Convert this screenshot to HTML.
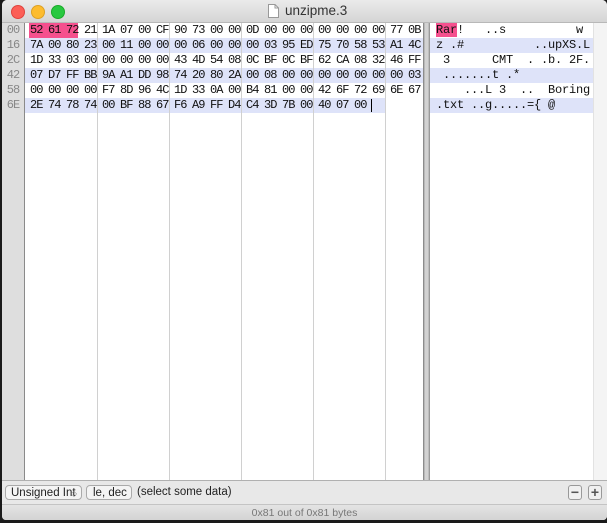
<!DOCTYPE html>
<html><head><style>
body{margin:0;width:607px;height:523px;background:#1a1a1a;position:relative;overflow:hidden;font-family:"Liberation Sans",sans-serif}
#win{position:absolute;left:2px;top:0;width:605px;height:520px;background:#ececec;border-radius:5px 5px 4px 4px;overflow:hidden}
#title{position:absolute;left:0;top:0;width:605px;height:22px;background:linear-gradient(#ebebeb,#d5d5d5);border-bottom:1px solid #b8b8b8}
.tl{position:absolute;top:5px;width:12px;height:12px;border-radius:50%}
#tt{position:absolute;left:283px;top:3px;font-size:13.5px;color:#333}
#gut{position:absolute;left:0;top:23px;width:22px;height:457px;background:#dedede;border-right:1px solid #8a8a8a}
#hex{position:absolute;left:23px;top:23px;width:398px;height:457px;background:#fff}
#div{position:absolute;left:421px;top:23px;width:7px;height:457px;background:linear-gradient(90deg,#777,#d2d2d2 30%,#d2d2d2 70%,#888)}
#txt{position:absolute;left:428px;top:23px;width:163px;height:457px;background:#fff;overflow:hidden}
#rg{position:absolute;left:591px;top:23px;width:14px;height:457px;background:#f4f4f4;border-left:1px solid #e2e2e2}
.row{position:absolute;left:0;height:15px;width:100%}
.b{background:#dee3f9}
.mono{font-family:"Liberation Mono",monospace;font-size:12px;line-height:15px;color:#111;white-space:pre}
.c{display:inline-block;width:18px;text-indent:5px;letter-spacing:-1px}
.sep{position:absolute;top:0;width:1px;height:457px;background:#d0d0d0}
.g{position:absolute;left:0;width:22px;text-align:center;color:#888;letter-spacing:-1px}
#bar{position:absolute;left:0;top:480px;width:605px;height:23px;border-top:1px solid #b0b0b0;background:#e8e8e8}
#stat{position:absolute;left:0;top:504px;width:605px;height:16px;border-top:1px solid #c4c4c4;background:linear-gradient(#e4e4e4,#d2d2d2);text-align:center;font-size:10.5px;color:#777;line-height:16px}
.btn{position:absolute;top:4px;height:15px;border:1px solid #aaa;border-radius:4px;background:#f4f4f4;font-size:11.5px;line-height:15px;color:#222;white-space:nowrap;overflow:hidden}
.sq{position:absolute;top:4px;width:12px;height:13px;border:1px solid #999;border-radius:3px;background:#f0f0f0;font-size:14px;line-height:12px;text-align:center;color:#555;font-weight:bold}
</style></head><body>
<div id="win">
<div id="title">
<div class="tl" style="left:9px;background:#fc5f57;border:.5px solid #e0443e"></div>
<div class="tl" style="left:29px;background:#fdbc2e;border:.5px solid #dea123"></div>
<div class="tl" style="left:49px;background:#28c840;border:.5px solid #1aab29"></div>
<svg style="position:absolute;left:266px;top:4px" width="11" height="14"><path d="M.5 .5H7L10.5 4V13.5H.5Z" fill="#fff" stroke="#999"/><path d="M7 .5V4H10.5" fill="none" stroke="#999"/></svg>
<div id="tt">unzipme.3</div>
</div>
<div id="gut" class="mono">
<div class="g" style="top:0">00</div><div class="g" style="top:15px">16</div><div class="g" style="top:30px">2C</div><div class="g" style="top:45px">42</div><div class="g" style="top:60px">58</div><div class="g" style="top:75px">6E</div>
</div>
<div id="hex" class="mono">
<div class="row" style="top:0"><span style="position:absolute;left:4px;top:0;width:49px;height:15px;background:#f5508e"></span></div>
<div class="row b" style="top:15px"></div><div class="row b" style="top:45px"></div><div class="row b" style="top:75px;width:360px"></div>
<div class="sep" style="left:72px"></div><div class="sep" style="left:144px"></div><div class="sep" style="left:216px"></div><div class="sep" style="left:288px"></div><div class="sep" style="left:360px"></div>
<div class="row" style="top:0"><span class="c">52</span><span class="c">61</span><span class="c">72</span><span class="c">21</span><span class="c">1A</span><span class="c">07</span><span class="c">00</span><span class="c">CF</span><span class="c">90</span><span class="c">73</span><span class="c">00</span><span class="c">00</span><span class="c">0D</span><span class="c">00</span><span class="c">00</span><span class="c">00</span><span class="c">00</span><span class="c">00</span><span class="c">00</span><span class="c">00</span><span class="c">77</span><span class="c">0B</span></div>
<div class="row" style="top:15px"><span class="c">7A</span><span class="c">00</span><span class="c">80</span><span class="c">23</span><span class="c">00</span><span class="c">11</span><span class="c">00</span><span class="c">00</span><span class="c">00</span><span class="c">06</span><span class="c">00</span><span class="c">00</span><span class="c">00</span><span class="c">03</span><span class="c">95</span><span class="c">ED</span><span class="c">75</span><span class="c">70</span><span class="c">58</span><span class="c">53</span><span class="c">A1</span><span class="c">4C</span></div>
<div class="row" style="top:30px"><span class="c">1D</span><span class="c">33</span><span class="c">03</span><span class="c">00</span><span class="c">00</span><span class="c">00</span><span class="c">00</span><span class="c">00</span><span class="c">43</span><span class="c">4D</span><span class="c">54</span><span class="c">08</span><span class="c">0C</span><span class="c">BF</span><span class="c">0C</span><span class="c">BF</span><span class="c">62</span><span class="c">CA</span><span class="c">08</span><span class="c">32</span><span class="c">46</span><span class="c">FF</span></div>
<div class="row" style="top:45px"><span class="c">07</span><span class="c">D7</span><span class="c">FF</span><span class="c">BB</span><span class="c">9A</span><span class="c">A1</span><span class="c">DD</span><span class="c">98</span><span class="c">74</span><span class="c">20</span><span class="c">80</span><span class="c">2A</span><span class="c">00</span><span class="c">08</span><span class="c">00</span><span class="c">00</span><span class="c">00</span><span class="c">00</span><span class="c">00</span><span class="c">00</span><span class="c">00</span><span class="c">03</span></div>
<div class="row" style="top:60px"><span class="c">00</span><span class="c">00</span><span class="c">00</span><span class="c">00</span><span class="c">F7</span><span class="c">8D</span><span class="c">96</span><span class="c">4C</span><span class="c">1D</span><span class="c">33</span><span class="c">0A</span><span class="c">00</span><span class="c">B4</span><span class="c">81</span><span class="c">00</span><span class="c">00</span><span class="c">42</span><span class="c">6F</span><span class="c">72</span><span class="c">69</span><span class="c">6E</span><span class="c">67</span></div>
<div class="row" style="top:75px"><span class="c">2E</span><span class="c">74</span><span class="c">78</span><span class="c">74</span><span class="c">00</span><span class="c">BF</span><span class="c">88</span><span class="c">67</span><span class="c">F6</span><span class="c">A9</span><span class="c">FF</span><span class="c">D4</span><span class="c">C4</span><span class="c">3D</span><span class="c">7B</span><span class="c">00</span><span class="c">40</span><span class="c">07</span><span class="c">00</span><span style="position:absolute;left:346px;top:1px;width:1px;height:13px;background:#000"></span></div>
</div>
<div id="div"></div>
<div id="txt" class="mono" style="font-size:12px;letter-spacing:-0.2px">
<div class="row b" style="top:15px"></div><div class="row b" style="top:45px"></div><div class="row b" style="top:75px"></div>
<div class="row" style="top:0;left:6px"><span style="background:#f5508e">Rar</span>!   ..s          w </div>
<div class="row" style="top:15px;left:6px">z .#          ..upXS.L</div>
<div class="row" style="top:30px;left:6px"> 3      CMT  . .b. 2F.</div>
<div class="row" style="top:45px;left:6px"> .......t .*          </div>
<div class="row" style="top:60px;left:6px">    ...L 3  ..  Boring</div>
<div class="row" style="top:75px;left:6px">.txt ..g.....={ @  </div>
</div>
<div id="rg"></div>
<div id="bar">
<div class="btn" style="left:3px;width:77px;padding-left:5px;box-sizing:border-box">Unsigned Int<span style="position:absolute;right:4px;top:0;color:#888;font-size:8px">◇</span></div>
<div class="btn" style="left:84px;width:46px;padding-left:6px;box-sizing:border-box">le, dec</div>
<div style="position:absolute;left:135px;top:5px;font-size:11.5px;color:#222">(select some data)</div>
<div class="sq" style="left:566px">−</div><div class="sq" style="left:586px">+</div>
</div>
<div id="stat">0x81 out of 0x81 bytes</div>
</div>
</body></html>
